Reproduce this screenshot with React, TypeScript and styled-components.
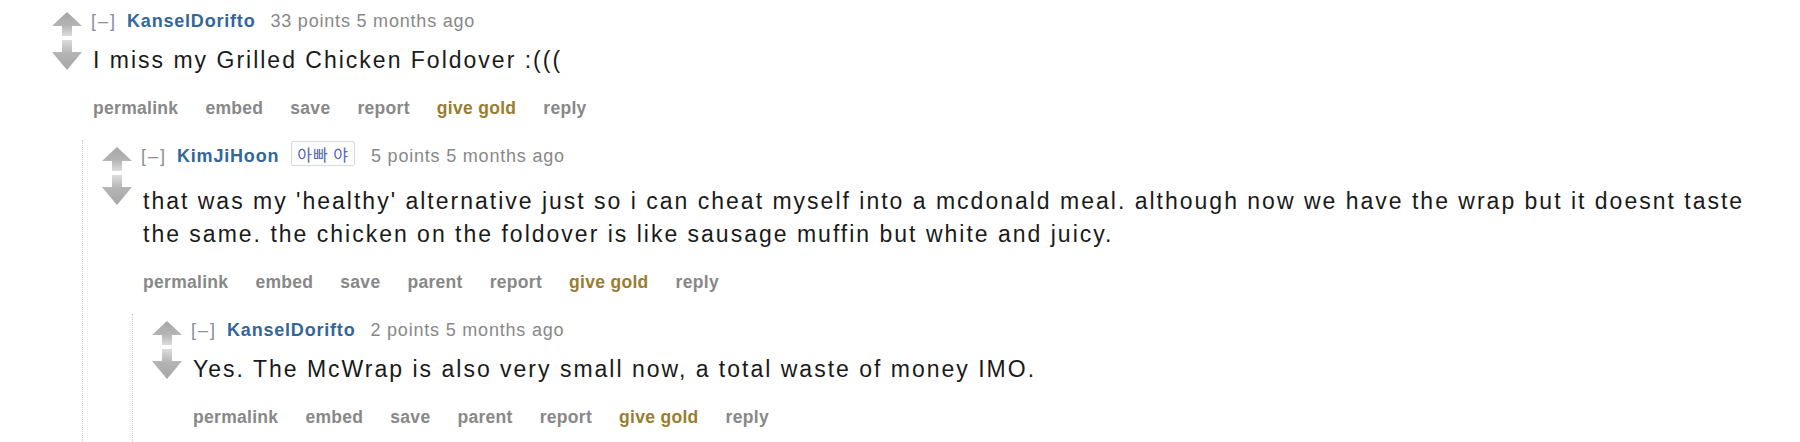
import React, { useId } from 'react'
import styled, { createGlobalStyle } from 'styled-components'

type CommentData = {
  author: string
  flair?: string
  points: number
  time: string
  body: string
  parent?: boolean
  replies?: CommentData[]
}

const thread: CommentData = {
  author: 'KanselDorifto',
  points: 33,
  time: '5 months ago',
  body: 'I miss my Grilled Chicken Foldover :(((',
  replies: [
    {
      author: 'KimJiHoon',
      flair: '아빠 야',
      points: 5,
      time: '5 months ago',
      parent: true,
      body:
        "that was my 'healthy' alternative just so i can cheat myself into a mcdonald meal. although now we have the wrap but it doesnt taste the same. the chicken on the foldover is like sausage muffin but white and juicy.",
      replies: [
        {
          author: 'KanselDorifto',
          points: 2,
          time: '5 months ago',
          parent: true,
          body: 'Yes. The McWrap is also very small now, a total waste of money IMO.',
        },
      ],
    },
  ],
}

const GlobalStyle = createGlobalStyle`
  html, body {
    margin: 0;
    padding: 0;
    background: #fff;
    overflow: hidden;
  }
  body {
    font-family: 'Liberation Sans', Arial, sans-serif;
  }
`

const Page = styled.div`
  padding: 9px 30px 0 52px;
`

const CommentRow = styled.div`
  display: flex;
  align-items: flex-start;
`

const Votes = styled.div`
  display: flex;
  flex-direction: column;
  align-items: center;
  gap: 4px;
  width: 30px;
  margin-top: 3px;
  flex-shrink: 0;
`

const Entry = styled.div`
  flex: 1;
  min-width: 0;
  margin-left: 11px;
`

const Tagline = styled.div`
  display: flex;
  align-items: flex-start;
  margin-left: -2px;
  font-size: 18px;
  line-height: 24px;
  letter-spacing: 0.8px;
  color: #888;
  white-space: pre;
`

const Expand = styled.span`
  margin-right: 10px;
  letter-spacing: 2px;
  color: #8a8fa0;
`

const Author = styled.span`
  font-weight: bold;
  color: #369;
`

const Flair = styled.span`
  display: inline-flex;
  align-items: center;
  box-sizing: border-box;
  height: 25px;
  margin: -3px 1px 8px 12px;
  padding: 0 5px;
  border: 1px solid #d9d9d9;
  border-radius: 2px;
  background: #fdfdfd;
  font-family: 'Noto Sans CJK KR', sans-serif;
  font-size: 16px;
  line-height: 1;
  letter-spacing: 1px;
  color: #5366b8;
`

const Score = styled.span`
  margin-left: 15px;
`

const Body = styled.div`
  margin-top: 11px;
  font-size: 23px;
  line-height: 33px;
  letter-spacing: 2px;
  color: #1a1a1a;
`

const Actions = styled.ul`
  display: flex;
  gap: 27px;
  margin: 20px 0 0;
  padding: 0;
  list-style: none;
  font-size: 17.5px;
  line-height: 22px;
  font-weight: bold;
  letter-spacing: 0.3px;
`

const Action = styled.li<{ $gold?: boolean }>`
  color: ${(p) => (p.$gold ? '#9a7d2e' : '#888')};
`

const Children = styled.div`
  margin: 21px 0 0 30px;
  padding: 4px 0 40px 19px;
  border-left: 1px dotted #ccd;
`

function Arrow({ down }: { down?: boolean }) {
  const id = useId()
  if (down) {
    return (
      <svg width="30" height="30" viewBox="0 0 30 30">
        <defs>
          <linearGradient id={id} x1="0" y1="0" x2="0" y2="1">
            <stop offset="0" stopColor="#dcdcdc" />
            <stop offset="0.45" stopColor="#b4b4b4" />
            <stop offset="1" stopColor="#a6a6a6" />
          </linearGradient>
        </defs>
        <polygon points="10,0 20,0 20,12 30,12 15,30 0,12 10,12" fill={`url(#${id})`} />
      </svg>
    )
  }
  return (
    <svg width="30" height="24" viewBox="0 0 30 24">
      <defs>
        <linearGradient id={id} x1="0" y1="0" x2="0" y2="1">
          <stop offset="0" stopColor="#a6a6a6" />
          <stop offset="0.55" stopColor="#b4b4b4" />
          <stop offset="1" stopColor="#dcdcdc" />
        </linearGradient>
      </defs>
      <polygon points="15,0 30,14 20,14 20,24 10,24 10,14 0,14" fill={`url(#${id})`} />
    </svg>
  )
}

function Comment({ data }: { data: CommentData }) {
  const links = data.parent
    ? ['permalink', 'embed', 'save', 'parent', 'report', 'give gold', 'reply']
    : ['permalink', 'embed', 'save', 'report', 'give gold', 'reply']

  return (
    <div>
      <CommentRow>
        <Votes>
          <Arrow />
          <Arrow down />
        </Votes>
        <Entry>
          <Tagline>
            <Expand>[–]</Expand>
            <Author>{data.author}</Author>
            {data.flair && <Flair>{data.flair}</Flair>}
            <Score>
              {data.points} points {data.time}
            </Score>
          </Tagline>
          <Body>{data.body}</Body>
          <Actions>
            {links.map((l) => (
              <Action key={l} $gold={l === 'give gold'}>
                {l}
              </Action>
            ))}
          </Actions>
        </Entry>
      </CommentRow>
      {data.replies && (
        <Children>
          {data.replies.map((r, i) => (
            <Comment key={i} data={r} />
          ))}
        </Children>
      )}
    </div>
  )
}

export default function App() {
  return (
    <>
      <GlobalStyle />
      <Page>
        <Comment data={thread} />
      </Page>
    </>
  )
}
